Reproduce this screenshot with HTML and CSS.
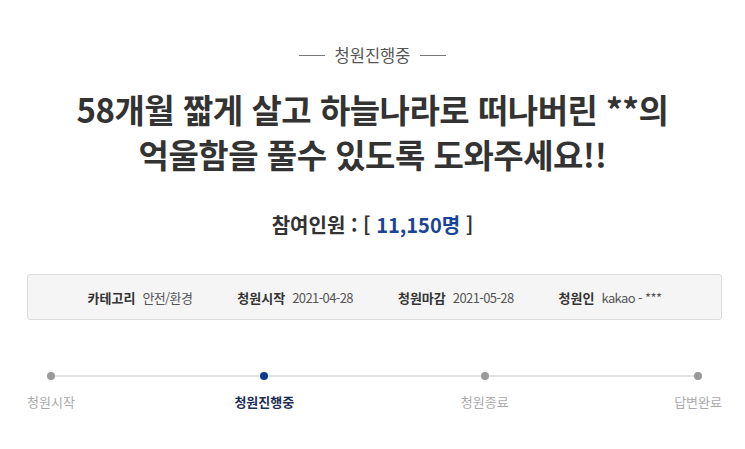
FILE: index.html
```html
<!DOCTYPE html>
<html lang="ko">
<head>
<meta charset="utf-8">
<link rel="stylesheet" href="styles.css">
</head>
<body>
<div class="page">
  <div class="status"><span class="rule"></span><span class="status-text">청원진행중</span><span class="rule"></span></div>
  <h1 class="title">58개월 짧게 살고 하늘나라로 떠나버린 **의<br>억울함을 풀수 있도록 도와주세요!!</h1>
  <div class="count">참여인원 : [ <span class="num">11,150명</span> ]</div>
  <div class="info">
    <div class="item"><span class="label">카테고리</span><span class="value">안전/환경</span></div>
    <div class="item"><span class="label">청원시작</span><span class="value">2021-04-28</span></div>
    <div class="item"><span class="label">청원마감</span><span class="value">2021-05-28</span></div>
    <div class="item"><span class="label">청원인</span><span class="value">kakao - ***</span></div>
  </div>
  <div class="steps">
    <div class="step"><span class="dot"></span><span class="step-label">청원시작</span></div>
    <div class="step mid active"><span class="dot"></span><span class="step-label">청원진행중</span></div>
    <div class="step mid"><span class="dot"></span><span class="step-label">청원종료</span></div>
    <div class="step"><span class="dot"></span><span class="step-label">답변완료</span></div>
  </div>
</div>
</body>
</html>
```

FILE: styles.css
```css
html, body {
  margin: 0;
  padding: 0;
  background: #fff;
}
body {
  font-family: "Noto Sans CJK KR", "Noto Sans", sans-serif;
  color: #333;
}
.page {
  width: 745px;
}
.status {
  margin-top: 45px;
  display: flex;
  justify-content: center;
  align-items: center;
  gap: 10px;
  height: 20px;
}
.rule {
  width: 26px;
  height: 1px;
  background: #777;
}
.status-text {
  font-size: 16.5px;
  line-height: 20px;
  color: #555;
}
.title {
  margin: 22px 0 0;
  text-align: center;
  font-size: 33px;
  line-height: 45px;
  font-weight: 700;
  color: #333;
  letter-spacing: -0.5px;
}
.count {
  margin-top: 35px;
  text-align: center;
  font-size: 20px;
  line-height: 26px;
  font-weight: 700;
  color: #333;
}
.num {
  color: #1a4596;
}
.info {
  margin: 36px 23px 0 27px;
  height: 44px;
  border: 1px solid #dcdcdc;
  border-radius: 3px;
  background: #f5f5f5;
  display: flex;
  justify-content: center;
  align-items: center;
  gap: 45px;
  font-size: 13px;
}
.label {
  font-weight: 700;
  color: #333;
}
.value {
  margin-left: 7px;
  color: #555;
  letter-spacing: -0.6px;
}
.steps {
  margin: 52px 23px 0 27px;
  display: flex;
  justify-content: space-between;
  position: relative;
}
.steps::before {
  content: "";
  position: absolute;
  top: 3px;
  left: 23px;
  right: 23px;
  height: 2px;
  background: #e2e2e2;
}
.step {
  display: flex;
  flex-direction: column;
  align-items: center;
  position: relative;
}
.step.mid {
  width: 62px;
}
.dot {
  width: 8px;
  height: 8px;
  border-radius: 50%;
  background: #999;
}
.step.active .dot {
  background: #0a3e8c;
}
.step-label {
  margin-top: 13px;
  font-size: 13px;
  line-height: 18px;
  color: #aaa;
  white-space: nowrap;
}
.step.active .step-label {
  color: #1c2d55;
  font-weight: 700;
}
```
